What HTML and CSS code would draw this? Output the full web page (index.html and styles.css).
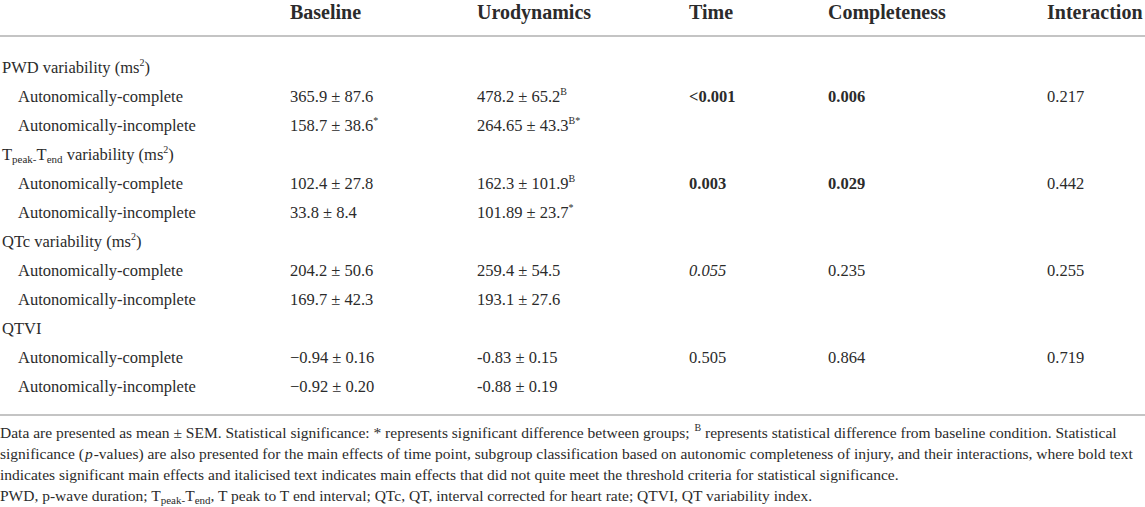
FILE: index.html
```html
<!DOCTYPE html>
<html>
<head>
<meta charset="utf-8">
<link rel="stylesheet" href="styles.css">
</head>
<body>
<div class="page">
<table class="data">
  <colgroup>
    <col class="c1"><col class="c2"><col class="c3"><col class="c4"><col class="c5"><col class="c6">
  </colgroup>
  <thead>
    <tr><th></th><th>Baseline</th><th>Urodynamics</th><th>Time</th><th>Completeness</th><th>Interaction</th></tr>
  </thead>
  <tbody>
    <tr class="first"><td class="grp">PWD variability (ms<sup>2</sup>)</td><td></td><td></td><td></td><td></td><td></td></tr>
    <tr><td class="sub">Autonomically-complete</td><td>365.9 ± 87.6</td><td>478.2 ± 65.2<sup>B</sup></td><td><b>&lt;0.001</b></td><td><b>0.006</b></td><td>0.217</td></tr>
    <tr><td class="sub">Autonomically-incomplete</td><td>158.7 ± 38.6<sup>*</sup></td><td>264.65 ± 43.3<sup>B*</sup></td><td></td><td></td><td></td></tr>
    <tr><td class="grp">T<sub>peak-</sub>T<sub>end</sub> variability (ms<sup>2</sup>)</td><td></td><td></td><td></td><td></td><td></td></tr>
    <tr><td class="sub">Autonomically-complete</td><td>102.4 ± 27.8</td><td>162.3 ± 101.9<sup>B</sup></td><td><b>0.003</b></td><td><b>0.029</b></td><td>0.442</td></tr>
    <tr><td class="sub">Autonomically-incomplete</td><td>33.8 ± 8.4</td><td>101.89 ± 23.7<sup>*</sup></td><td></td><td></td><td></td></tr>
    <tr><td class="grp">QTc variability (ms<sup>2</sup>)</td><td></td><td></td><td></td><td></td><td></td></tr>
    <tr><td class="sub">Autonomically-complete</td><td>204.2 ± 50.6</td><td>259.4 ± 54.5</td><td><i>0.055</i></td><td>0.235</td><td>0.255</td></tr>
    <tr><td class="sub">Autonomically-incomplete</td><td>169.7 ± 42.3</td><td>193.1 ± 27.6</td><td></td><td></td><td></td></tr>
    <tr><td class="grp">QTVI</td><td></td><td></td><td></td><td></td><td></td></tr>
    <tr><td class="sub">Autonomically-complete</td><td>−0.94 ± 0.16</td><td>-0.83 ± 0.15</td><td>0.505</td><td>0.864</td><td>0.719</td></tr>
    <tr class="last"><td class="sub">Autonomically-incomplete</td><td>−0.92 ± 0.20</td><td>-0.88 ± 0.19</td><td></td><td></td><td></td></tr>
  </tbody>
</table>
<div class="notes">
  <p>Data are presented as mean ± SEM. Statistical significance: * represents significant difference between groups; <sup class="nb">B</sup> represents statistical difference from baseline condition. Statistical significance (<i class="pv">p</i>-values) are also presented for the main effects of time point, subgroup classification based on autonomic completeness of injury, and their interactions, where bold text indicates significant main effects and italicised text indicates main effects that did not quite meet the threshold criteria for statistical significance.</p>
  <p>PWD, p-wave duration; T<sub>peak-</sub>T<sub>end</sub>, T peak to T end interval; QTc, QT, interval corrected for heart rate; QTVI, QT variability index.</p>
</div>
</div>
</body>
</html>
```
FILE: styles.css
```css
html, body {
  margin: 0;
  padding: 0;
  background: #ffffff;
}
.page {
  width: 1145px;
  font-family: "Liberation Serif", "Times New Roman", serif;
  color: #2b2b2b;
}
.data {
  width: 1145px;
  border-collapse: collapse;
  table-layout: fixed;
}
.c1 { width: 290px; }
.c2 { width: 187px; }
.c3 { width: 212px; }
.c4 { width: 139px; }
.c5 { width: 219px; }
.c6 { width: 98px; }
.data th {
  font-size: 20px;
  font-weight: bold;
  text-align: left;
  padding: 0;
  height: 35px;
  line-height: 25px;
  vertical-align: top;
  border-bottom: 2px solid #c4c4c4;
  white-space: nowrap;
}
.data td {
  font-size: 16.5px;
  padding: 0;
  height: 29px;
  line-height: 29px;
  white-space: nowrap;
  vertical-align: middle;
}
.data tr.first td {
  padding-top: 16px;
}
.data tr.last td {
  padding-bottom: 13px;
  border-bottom: 2px solid #c4c4c4;
}
.grp { padding-left: 2px !important; }
.sub { padding-left: 18px !important; }
sup {
  font-size: 10px;
  line-height: 0;
  vertical-align: 7px;
}
sub {
  font-size: 11px;
  line-height: 0;
  vertical-align: -3px;
}
.notes {
  padding-top: 6px;
  font-size: 15.5px;
  line-height: 21px;
}
.notes p {
  margin: 0;
}
.nb {
  margin-left: 1px;
}
.pv {
  padding: 0 1px;
}
```
